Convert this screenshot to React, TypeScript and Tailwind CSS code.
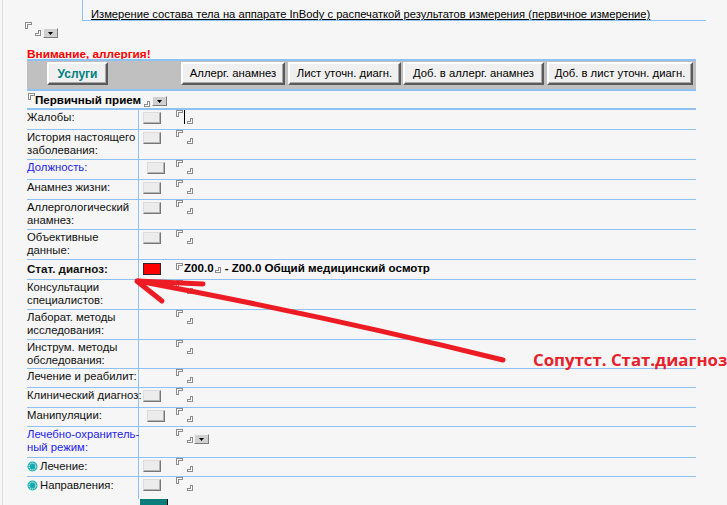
import React from "react"

const line = "border-[#8ec2f2]"

function MarkTL() {
  return (
    <svg width="7" height="7" className="block shrink-0" shapeRendering="crispEdges">
      <polygon points="0.5,6.5 0.5,0.5 6.5,0.5 6.5,2.5 2.5,2.5 2.5,6.5" fill="#ffffff" stroke="#8c8c8c" strokeWidth="1" />
    </svg>
  )
}

function MarkBR() {
  return (
    <svg width="6" height="6" className="block shrink-0" shapeRendering="crispEdges">
      <polygon points="5.5,0.5 5.5,5.5 0.5,5.5 0.5,3.5 3.5,3.5 3.5,0.5" fill="#ffffff" stroke="#8c8c8c" strokeWidth="1" />
    </svg>
  )
}

function Drop({ className = "" }: { className?: string }) {
  return (
    <span className={"flex w-[15px] h-[10px] shrink-0 items-center justify-center bg-[#d0d0d0] border border-t-[#f4f4f4] border-l-[#f4f4f4] border-r-[#7c7c7c] border-b-[#7c7c7c] " + className}>
      <svg width="5" height="3" className="block"><path d="M0 0H5L2.5 3Z" fill="#000" /></svg>
    </span>
  )
}

function SmallBtn({ red = false }: { red?: boolean }) {
  if (red) {
    return <span className="block w-[18px] h-[12px] bg-[#ff0000] border border-[#2a2a2a]" />
  }
  return (
    <span className="block w-[18px] h-[12px] bg-[#ececec] border border-t-[#dcdcdc] border-l-[#dcdcdc] border-r-[#777] border-b-[#777] shadow-[inset_-1px_-1px_0_#b4b4b4]" />
  )
}

function Field({ cursor = false }: { cursor?: boolean }) {
  return (
    <div className="flex h-[14px] shrink-0">
      <MarkTL />
      <div className="w-[4px] flex">
        {cursor && <span className="ml-[1px] w-[1px] h-[14px] bg-black" />}
      </div>
      <div className="self-end"><MarkBR /></div>
    </div>
  )
}

function Radio() {
  return (
    <svg width="11" height="11" className="block shrink-0 mr-[2px]">
      <circle cx="5.5" cy="5.5" r="5" fill="#22b3b3" />
      <circle cx="5.5" cy="5.5" r="3.4" fill="none" stroke="#ffffff" strokeWidth="1" strokeDasharray="1.2 1" />
      <circle cx="5.5" cy="5.5" r="2.4" fill="#1aa9a9" />
    </svg>
  )
}

function ToolBtn({ w, ml, children, bold = false }: { w: string; ml: string; children: React.ReactNode; bold?: boolean }) {
  return (
    <button
      className={[
        "h-[23px] shrink-0 flex items-center justify-center bg-[#f0f0f0] border-2 border-t-white border-l-white border-r-[#5a5a5a] border-b-[#5a5a5a] shadow-[inset_-1px_-1px_0_#a8a8a8]",
        w,
        ml,
        bold ? "text-[12px] font-bold text-[#008080]" : "text-[11.3px] text-black",
      ].join(" ")}
    >
      {children}
    </button>
  )
}

type Row = {
  label: string[]
  h: string
  btn?: boolean
  shift?: boolean
  blue?: boolean
  cursor?: boolean
  drop?: boolean
  radio?: boolean
  last?: boolean
}

const rows: Row[] = [
  { label: ["Жалобы:"], h: "h-[20px]", btn: true, cursor: true },
  { label: ["История настоящего", "заболевания:"], h: "h-[30px]", btn: true },
  { label: ["Должность:"], h: "h-[20px]", btn: true, shift: true, blue: true },
  { label: ["Анамнез жизни:"], h: "h-[20px]", btn: true },
  { label: ["Аллергологический", "анамнез:"], h: "h-[30px]", btn: true },
  { label: ["Объективные", "данные:"], h: "h-[30px]", btn: true },
  { label: ["STAT"], h: "h-[20px]" },
  { label: ["Консультации", "специалистов:"], h: "h-[30px]" },
  { label: ["Лаборат. методы", "исследования:"], h: "h-[30px]" },
  { label: ["Инструм. методы", "обследования:"], h: "h-[29px]" },
  { label: ["Лечение и реабилит:"], h: "h-[19px]" },
  { label: ["Клинический диагноз:"], h: "h-[20px]", btn: true },
  { label: ["Манипуляции:"], h: "h-[19px]", btn: true, shift: true },
  { label: ["Лечебно-охранитель-", "ный режим:"], h: "h-[31px]", blue: true, drop: true },
  { label: ["Лечение:"], h: "h-[19px]", btn: true, radio: true },
  { label: ["Направления:"], h: "h-[21px]", btn: true, radio: true, last: true },
]

function TableRow({ r }: { r: Row }) {
  const stat = r.label[0] === "STAT"
  return (
    <div className={"flex shrink-0 " + r.h + (r.last ? "" : " border-b " + line)}>
      <div className={"w-[112px] shrink-0 border-r pt-[1px] leading-[13px] whitespace-nowrap " + line + (r.blue ? " text-[#2323ee]" : " text-[#111]")}>
        {stat ? (
          <div className="pt-[1px] font-bold text-[11.6px]">Стат. диагноз:</div>
        ) : r.radio ? (
          <div className="flex items-center pt-[1px]">
            <Radio />
            <span>{r.label[0]}</span>
          </div>
        ) : (
          r.label.map((l) => <div key={l}>{l}</div>)
        )}
      </div>
      {stat ? (
        <div className="flex items-start">
          <div className="w-[37px] pl-[4px] pt-[3px] shrink-0"><SmallBtn red /></div>
          <div className="mt-[3px]"><MarkTL /></div>
          <span className="ml-[1px] mt-[1px] leading-[14px] font-bold text-[11.6px] text-black">Z00.0</span>
          <div className="ml-[1px] mt-[7px]"><MarkBR /></div>
          <span className="ml-[4px] mt-[1px] leading-[14px] font-bold text-[11.6px] text-black whitespace-nowrap">- Z00.0 Общий медицинский осмотр</span>
        </div>
      ) : (
        <div className="flex items-start">
          <div className={"w-[37px] pt-[2px] shrink-0 " + (r.shift ? "pl-[8px]" : "pl-[4px]")}>
            {r.btn && <SmallBtn />}
          </div>
          <div className={r.drop ? "pt-[2px]" : ""}><Field cursor={r.cursor} /></div>
          {r.drop && <Drop className="ml-[1px] mt-[7px]" />}
        </div>
      )}
    </div>
  )
}

export default function App() {
  return (
    <div className="relative w-[727px] h-[505px] overflow-hidden bg-[#f6f6f6] font-['Liberation_Sans',Arial,sans-serif] text-[11.3px] text-black">
      <div className="ml-[2px] h-full border-l border-[#dedede] flex flex-col">
        <div className={"ml-[79px] w-[624px] h-[21px] shrink-0 border-l border-b pl-[8px] pt-[8px] leading-[12px] text-[11.2px] " + line}>
          <span className="underline whitespace-nowrap">Измерение состава тела на аппарате InBody с распечаткой результатов измерения (первичное измерение)</span>
        </div>
        <div className="h-[27px] shrink-0 pl-[22px] pt-[1px] flex items-start">
          <div className="flex h-[14px]">
            <MarkTL />
            <div className="w-[3px]" />
            <div className="self-end"><MarkBR /></div>
          </div>
          <Drop className="ml-[2px] mt-[6px]" />
        </div>
        <div className="h-[11px] shrink-0 pl-[24px] leading-[12px] font-bold text-[11.8px] text-[#ff0000]">Внимание, аллергия!</div>

        <div className="ml-[24px] w-[669px] flex flex-col">
          <div className={"h-[32px] shrink-0 flex items-start pt-[1px] bg-[#c0c0c0] border-t-2 border-b-2 " + line}>
            <ToolBtn w="w-[61px]" ml="ml-[20px]" bold>Услуги</ToolBtn>
            <ToolBtn w="w-[104px]" ml="ml-[73px]">Аллерг. анамнез</ToolBtn>
            <ToolBtn w="w-[113px]" ml="ml-[3px]">Лист уточн. диагн.</ToolBtn>
            <ToolBtn w="w-[141px]" ml="ml-[2px]">Доб. в аллерг. анамнез</ToolBtn>
            <ToolBtn w="w-[146px]" ml="ml-[3px]">Доб. в лист уточн. диагн.</ToolBtn>
          </div>
          <div className={"h-[19px] shrink-0 flex items-start pl-[1px] pt-[2px] border-b-2 " + line}>
            <MarkTL />
            <span className="leading-[14px] font-bold text-[11.6px] text-black whitespace-nowrap">Первичный прием</span>
            <div className="ml-[3px] mt-[8px]"><MarkBR /></div>
            <Drop className="ml-[2px] mt-[3px]" />
          </div>
          {rows.map((r) => (
            <TableRow key={r.label.join(" ")} r={r} />
          ))}
          <div className="flex">
            <div className={"w-[112px] h-[1px] shrink-0 border-r " + line} />
            <div className="ml-[1px] mt-[1px] w-[28px] h-[12px] bg-[#0b7d7a] border-r border-black" />
          </div>
        </div>
      </div>

      <svg width="727" height="505" className="absolute left-0 top-0 pointer-events-none">
        <g stroke="#ed1c24" strokeWidth="5" strokeLinecap="round" fill="none">
          <path d="M503 360 Q 330 317 138 281" />
          <path d="M137 281 L203 284" />
          <path d="M138 282 L162 301" />
        </g>
      </svg>
      <div className="absolute left-[533px] top-[350px] leading-[20px] font-['Open_Sans',sans-serif] font-bold text-[16.8px] text-[#e8202a] whitespace-nowrap">
        Сопутст. Стат.диагноз
      </div>
    </div>
  )
}
